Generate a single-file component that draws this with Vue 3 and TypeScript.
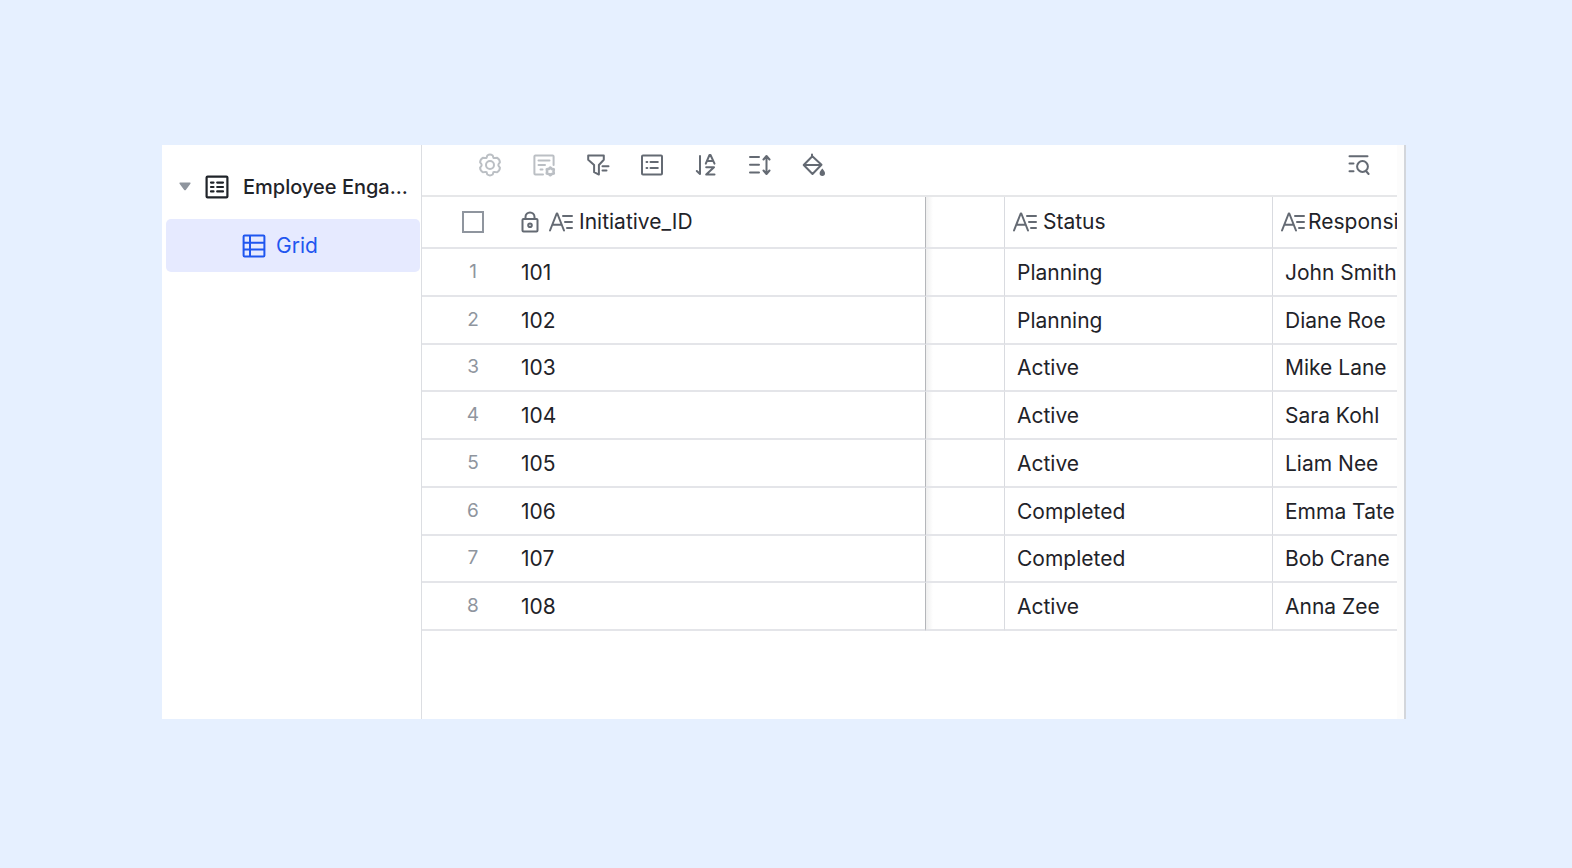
<script setup lang="ts">
import { ref } from 'vue'

interface Initiative {
  id: string
  status: string
  owner: string
}

const initiatives: Initiative[] = [
  { id: '101', status: 'Planning', owner: 'John Smith' },
  { id: '102', status: 'Planning', owner: 'Diane Roe' },
  { id: '103', status: 'Active', owner: 'Mike Lane' },
  { id: '104', status: 'Active', owner: 'Sara Kohl' },
  { id: '105', status: 'Active', owner: 'Liam Nee' },
  { id: '106', status: 'Completed', owner: 'Emma Tate' },
  { id: '107', status: 'Completed', owner: 'Bob Crane' },
  { id: '108', status: 'Active', owner: 'Anna Zee' },
]

const allSelected = ref(false)
</script>

<template>
  <div class="page">
    <div class="frame">
      <nav class="sidebar">
        <button class="table-item" type="button">
          <svg class="caret" viewBox="0 0 12 9" aria-hidden="true">
            <path d="M1.2.5h9.6c.7 0 1 .7.6 1.2L6.8 7.9c-.4.5-1.2.5-1.6 0L.6 1.7C.2 1.2.5.5 1.2.5z" fill="#8f959e" />
          </svg>
          <svg class="icon" viewBox="0 0 24 24" aria-hidden="true">
            <rect x="1.6" y="1.6" width="20.8" height="20.8" rx="1" fill="none" stroke="currentColor" stroke-width="2.2" />
            <path d="M6 7.6h2.5M6 12h2.5M6 16.4h2.5M12.2 7.6h5.8M12.2 12h5.8M12.2 16.4h5.8" fill="none" stroke="currentColor" stroke-width="2.2" stroke-linecap="round" />
          </svg>
          <span class="table-name">Employee Enga...</span>
        </button>
        <a class="view-item" href="#grid">
          <svg class="icon" viewBox="0 0 24 24" fill="none" stroke="currentColor" stroke-width="2" aria-hidden="true">
            <rect x="1.6" y="1.6" width="20.8" height="20.8" rx="1" />
            <path d="M8 2v20M2 8.7h20M2 15.4h20" />
          </svg>
          <span>Grid</span>
        </a>
      </nav>

      <main class="content">
        <div class="toolbar">
          <button class="tool muted" type="button" aria-label="Settings">
            <svg viewBox="0 0 24 24">
              <path d="M9.3 2.5Q12 .7 14.7 2.5L15.4 4.8Q16.2 5.3 17.2 5L19.2 4.8Q21.8 6.3 21.9 9.3L20.6 11Q20.2 12 20.6 13L21.9 14.7Q21.8 17.7 19.2 19.2L17.2 19Q16.2 18.7 15.4 19.2L14.7 21.5Q12 23.3 9.3 21.5L8.6 19.2Q7.8 18.7 6.8 19L4.8 19.2Q2.2 17.7 2.1 14.7L3.4 13Q3.8 12 3.4 11L2.1 9.3Q2.2 6.3 4.8 4.8L6.8 5Q7.8 5.3 8.6 4.8Z" />
              <circle cx="12" cy="12" r="4" />
            </svg>
          </button>
          <button class="tool muted" type="button" aria-label="Customize fields">
            <svg viewBox="0 0 24 24">
              <path d="M11 21.4H3.4a1 1 0 0 1-1-1V3.4a1 1 0 0 1 1-1h17.2a1 1 0 0 1 1 1V12M6.5 7.5h11M6.5 12h6.5M8.5 16.5h2" />
              <path d="M18.3 14.6l1.5 1.3 2 .3-.3 2.2.3 2-2 .5-1.5 1.3-1.5-1.3-2-.5.3-2-.3-2.2 2-.3z" stroke-width="2.6" />
            </svg>
          </button>
          <button class="tool" type="button" aria-label="Filter">
            <svg viewBox="0 0 24 24">
              <path d="M2.2 2.5h15.6v4.3L12.9 12v9.6l-4.800-2.400V12L2.2 6.8zM16.5 13.2h6M16.5 17.6h4" />
            </svg>
          </button>
          <button class="tool" type="button" aria-label="Group">
            <svg viewBox="0 0 24 24">
              <rect x="2" y="2.5" width="20" height="19" rx="1" />
              <path d="M6.5 9h.8M6.5 15h.8M10.5 9h7.3M10.5 15h7.3" />
            </svg>
          </button>
          <button class="tool" type="button" aria-label="Sort">
            <svg viewBox="0 0 24 24">
              <path d="M6 3v18L2.8 18M11.8 10.7L15.5 2h1L20.5 10.7M13.2 8h5.8M12.2 14.2h7.8l-7.8 7.3h8.3" />
            </svg>
          </button>
          <button class="tool" type="button" aria-label="Row height">
            <svg viewBox="0 0 24 24">
              <path d="M2 4h9M2 11.8h9M2 19.6h9M18.5 3.500v17M15.5 6.5l3-3.500 3 3.500M15.5 17.5l3 3.500 3-3.500" />
            </svg>
          </button>
          <button class="tool" type="button" aria-label="Fill color">
            <svg viewBox="0 0 24 24">
              <path d="M10 1.5v2M10.3 3.2l9.2 8.5-9 9.3-8.8-9 8.6-8.8M2.5 12h16.5" />
              <path class="solid" d="M20.3 15.5c1.4 1.7 2.7 3.2 2.7 4.7a2.7 2.7 0 0 1-5.4 0c0-1.5 1.3-3 2.7-4.7z" />
            </svg>
          </button>
          <button class="tool search" type="button" aria-label="Find records">
            <svg viewBox="0 0 24 24">
              <path d="M2.5 3.2h18M2.5 10.4h4M2.5 18.3h4M19 18l2.6 3" />
              <circle cx="15.5" cy="13.5" r="5.4" />
            </svg>
          </button>
        </div>

        <div class="grid-wrap">
          <table class="grid">
            <colgroup>
              <col class="col-index" />
              <col />
              <col class="col-gap" />
              <col class="col-status" />
              <col class="col-owner" />
            </colgroup>
            <thead>
              <tr>
                <th class="index"><input v-model="allSelected" type="checkbox" aria-label="Select all records" /></th>
                <th class="primary">
                  <div class="head">
                    <svg class="lock" viewBox="0 0 18 22" aria-hidden="true">
                      <rect x="1.5" y="8" width="15" height="12.5" rx="1" />
                      <path d="M4.5 8V6a4.5 4.5 0 0 1 9 0v2" />
                      <circle cx="9" cy="14.2" r="1.8" />
                    </svg>
                    <svg class="type" viewBox="0 0 24 20" aria-hidden="true">
                      <path d="M1 18.5L7.7 1.5h.6L15 18.5M3.4 12.8h9.4M14 4h9M16 10h7M18 16h5" />
                    </svg>
                    <span>Initiative_ID</span>
                  </div>
                </th>
                <th class="gap"></th>
                <th class="status">
                  <div class="head">
                    <svg class="type" viewBox="0 0 24 20" aria-hidden="true">
                      <path d="M1 18.5L7.7 1.5h.6L15 18.5M3.4 12.8h9.4M14 4h9M16 10h7M18 16h5" />
                    </svg>
                    <span>Status</span>
                  </div>
                </th>
                <th>
                  <div class="head compact">
                    <svg class="type" viewBox="0 0 24 20" aria-hidden="true">
                      <path d="M1 18.5L7.7 1.5h.6L15 18.5M3.4 12.8h9.4M14 4h9M16 10h7M18 16h5" />
                    </svg>
                    <span>Responsible</span>
                  </div>
                </th>
              </tr>
            </thead>
            <tbody>
              <tr v-for="(row, i) in initiatives" :key="row.id">
                <td class="index">{{ i + 1 }}</td>
                <td class="primary">{{ row.id }}</td>
                <td class="gap"></td>
                <td class="status">{{ row.status }}</td>
                <td>{{ row.owner }}</td>
              </tr>
            </tbody>
          </table>
        </div>
      </main>
      <div class="scroll-track"></div>
    </div>
  </div>
</template>

<style>
body {
  margin: 0;
}
</style>

<style scoped>
.page {
  box-sizing: border-box;
  min-height: 100vh;
  padding: 145px 166px 149px 162px;
  display: flex;
  background: #e6f0ff;
  color: #1f2329;
  font-family: Inter, "Liberation Sans", sans-serif;
  font-size: 21px;
  line-height: 28px;
}

.frame {
  flex: 1;
  min-width: 0;
  display: flex;
  background: #fff;
}

.sidebar {
  box-sizing: border-box;
  flex: 0 0 260px;
  min-width: 0;
  padding: 21px 1px 0 4px;
  border-right: 1px solid #dcdee2;
}

.table-item {
  box-sizing: border-box;
  width: 100%;
  height: 40px;
  margin-bottom: 13px;
  padding: 1px 0 0 13px;
  display: flex;
  align-items: center;
  border: 0;
  background: none;
  color: #1f2329;
  font: inherit;
  font-size: 20px;
  font-weight: 500;
  text-align: left;
}

.caret {
  flex: none;
  width: 12px;
  height: 9px;
  margin-right: 14px;
}

.icon {
  flex: none;
  width: 24px;
  height: 24px;
}

.table-name {
  min-width: 0;
  margin-left: 14px;
  overflow: hidden;
  white-space: nowrap;
  text-overflow: ellipsis;
}

.view-item {
  height: 53px;
  padding-left: 76px;
  display: flex;
  align-items: center;
  gap: 10px;
  border-radius: 5px;
  background: #e6eaff;
  color: #1f56f0;
  text-decoration: none;
}

.content {
  flex: 1;
  min-width: 0;
}

.toolbar {
  height: 24px;
  padding: 8px 26px 18px 56px;
  display: flex;
  gap: 30px;
}

.tool {
  width: 24px;
  height: 24px;
  padding: 0;
  border: 0;
  background: none;
  color: #646a73;
}

.tool.muted {
  color: #bbbfc4;
}

.tool.search {
  margin-left: auto;
}

.tool svg {
  display: block;
  width: 24px;
  height: 24px;
  fill: none;
  stroke: currentColor;
  stroke-width: 2;
  stroke-linecap: round;
  stroke-linejoin: round;
}

.tool .solid {
  fill: currentColor;
  stroke: none;
}

.grid-wrap {
  overflow: hidden;
  border-top: 2px solid #e6e7e9;
}

.grid {
  width: 100%;
  height: 434px;
  table-layout: fixed;
  border-collapse: separate;
  border-spacing: 0;
}

.col-index {
  width: 88px;
}

.col-gap {
  width: 79px;
}

.col-status {
  width: 268px;
}

.col-owner {
  width: 124px;
}

th,
td {
  box-sizing: border-box;
  padding: 2px 0 0 12px;
  overflow: hidden;
  border-bottom: 2px solid #e4e5e9;
  text-align: left;
  white-space: nowrap;
  font-weight: 400;
}

th {
  height: 52px;
  padding: 0 0 0 8px;
}

.index {
  padding: 0 0 0 14px;
  color: #8f959e;
  font-size: 19px;
  text-align: center;
}

.primary {
  padding-left: 11px;
  border-right: 1px solid #b4b6ba;
}

.gap {
  padding: 0;
  border-right: 1px solid #d9dbe0;
  background: linear-gradient(to right, #efefef, #fff 7px);
}

.status {
  border-right: 1px solid #d9dbe0;
}

.head {
  display: flex;
  align-items: center;
  gap: 6px;
}

.head.compact {
  gap: 3px;
}

.head svg {
  flex: none;
  fill: none;
  stroke: #646a73;
  stroke-width: 2;
  stroke-linecap: round;
  stroke-linejoin: round;
}

.lock {
  width: 18px;
  height: 22px;
  margin-right: 4px;
}

.type {
  width: 24px;
  height: 20px;
}

.index input {
  appearance: none;
  box-sizing: border-box;
  display: block;
  width: 22px;
  height: 22px;
  margin: 0 auto;
  border: 2px solid #8f959e;
  background: #fff;
}

.index input:checked {
  background: #1f56f0;
}

.scroll-track {
  flex: 0 0 7px;
  border-right: 2px solid #d3d6db;
  background: #fcfcfc;
}
</style>
